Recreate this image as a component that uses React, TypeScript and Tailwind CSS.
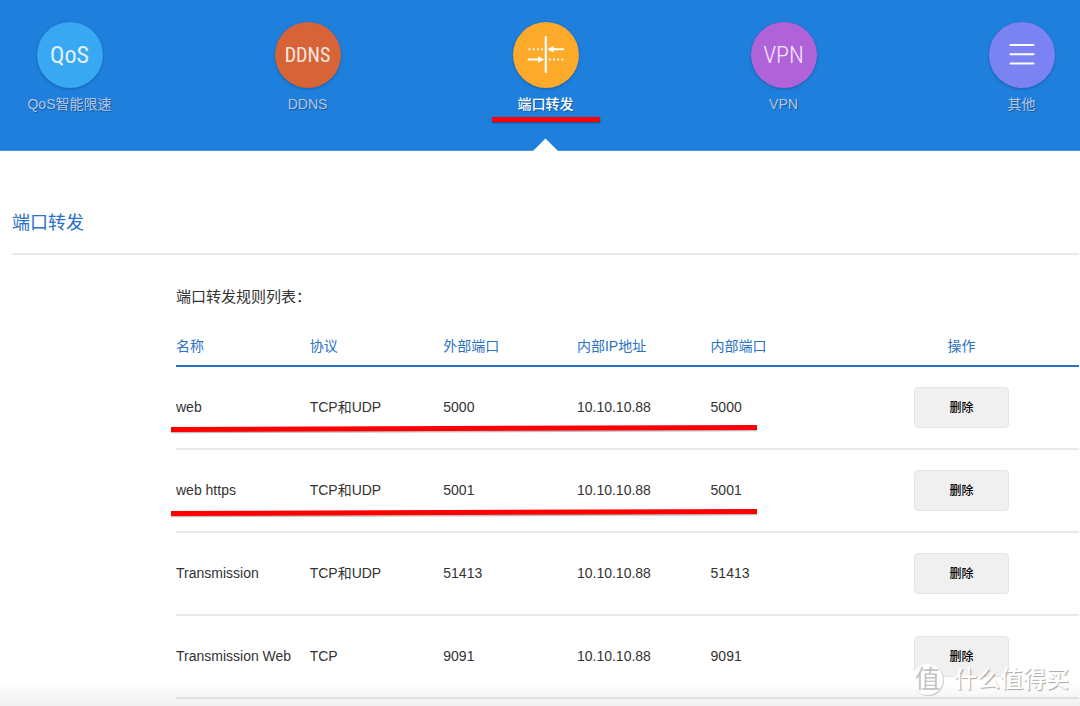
import React from "react";

type NavItem = {
  label: string;
  circle: string;
  icon: React.ReactNode;
  active?: boolean;
};

const iconText =
  "font-['Roboto_Condensed','Open_Sans_Condensed','Liberation_Sans_Narrow',sans-serif] leading-none text-white/85";

function ForwardIcon() {
  return (
    <svg width="66" height="66" viewBox="0 0 66 66" aria-hidden="true">
      <path d="M32.8 15v35" stroke="#fff" strokeWidth="2.2" strokeLinecap="round" />
      <path d="M15.5 27.3H30M35.8 37.5H51" stroke="#fff" strokeWidth="2" strokeDasharray="2 2.2" opacity=".85" />
      <path d="M39 27.3H50.3M15.5 37.5H27" stroke="#fff" strokeWidth="2" strokeLinecap="round" />
      <path d="M34.3 27.3l6.2-3.3v6.6zM31.2 37.5l-6.2-3.3v6.6z" fill="#fff" />
    </svg>
  );
}

function MenuIcon() {
  return (
    <svg width="66" height="66" viewBox="0 0 66 66" aria-hidden="true">
      <path d="M21.5 23h23M21.5 32.3h23M21.5 41.4h23" stroke="#fff" strokeWidth="2" strokeLinecap="round" />
    </svg>
  );
}

const navItems: NavItem[] = [
  {
    label: "QoS智能限速",
    circle: "bg-[#38a8f3]",
    icon: <span className={`${iconText} text-[24px] font-normal`}>QoS</span>,
  },
  {
    label: "DDNS",
    circle: "bg-[#d66436]",
    icon: <span className={`${iconText} text-[20px] font-normal`}>DDNS</span>,
  },
  { label: "端口转发", circle: "bg-[#fda92a]", icon: <ForwardIcon />, active: true },
  {
    label: "VPN",
    circle: "bg-[#b062d9]",
    icon: <span className={`${iconText} text-[24px] font-light`}>VPN</span>,
  },
  { label: "其他", circle: "bg-[#7b83f2]", icon: <MenuIcon /> },
];

const rules = [
  { name: "web", protocol: "TCP和UDP", outer: "5000", ip: "10.10.10.88", inner: "5000" },
  { name: "web https", protocol: "TCP和UDP", outer: "5001", ip: "10.10.10.88", inner: "5001" },
  { name: "Transmission", protocol: "TCP和UDP", outer: "51413", ip: "10.10.10.88", inner: "51413" },
  { name: "Transmission Web", protocol: "TCP", outer: "9091", ip: "10.10.10.88", inner: "9091" },
];

const columns = ["名称", "协议", "外部端口", "内部IP地址", "内部端口"];

function Marker({ className }: { className: string }) {
  return (
    <svg
      className={`pointer-events-none absolute ${className}`}
      width="586"
      height="12"
      viewBox="0 0 586 12"
      aria-hidden="true"
    >
      <path d="M0 7.8L586 5.8" stroke="#000" strokeOpacity=".25" strokeWidth="5" />
      <path d="M0 6.5L586 4.5" stroke="#fe0000" strokeWidth="5" />
    </svg>
  );
}

export default function App() {
  return (
    <div className="relative overflow-hidden bg-white pb-[7px] font-['Liberation_Sans','Noto_Sans_CJK_SC',sans-serif] text-[14px] text-[#333]">
      <nav className="h-[151px] border-b border-[#4a98e4] bg-[#1f7fdd] pt-[22px] pr-[15px] pl-[26px]">
        <ul className="flex h-full justify-between">
          {navItems.map((item) => (
            <li key={item.label} className="relative w-[87px]">
              <a href="#" className="flex flex-col items-center gap-[6px]">
                <span
                  className={`flex size-[66px] items-center justify-center rounded-full shadow-[0_1px_3px_rgba(0,0,0,0.25)] ${item.circle}`}
                >
                  {item.icon}
                </span>
                <span
                  className={`leading-[20px] whitespace-nowrap [text-shadow:1px_1px_1px_rgba(0,0,0,0.3)] ${item.active ? "font-medium text-white" : "text-[#b4c5e3]"}`}
                >
                  {item.label}
                </span>
              </a>
              {item.active && (
                <>
                  <span className="absolute top-[95px] -right-[11px] -left-[10px] h-[5px] bg-[#fe0000] shadow-[0_1px_2px_rgba(0,0,0,0.4)]" />
                  <svg
                    className="absolute -bottom-px left-[31px]"
                    width="25"
                    height="13"
                    viewBox="0 0 25 13"
                    aria-hidden="true"
                  >
                    <path d="M0 13L12.5 0.5L25 13z" fill="#fff" />
                  </svg>
                </>
              )}
            </li>
          ))}
        </ul>
      </nav>

      <main className="pt-[60px] pr-px pl-[12px]">
        <h1 className="border-b-2 border-[#e9e9e9] pb-[18px] text-[18px] leading-[24px] text-[#2a72c3]">端口转发</h1>
        <section className="relative ml-[164px] pt-[30px]">
          <h2 className="mb-[18px] text-[15px] leading-[24px]">端口转发规则列表：</h2>
          <table className="w-full table-fixed border-separate border-spacing-0">
            <thead>
              <tr className="h-[40px] text-[#2a72c3]">
                {columns.map((c) => (
                  <th key={c} className="w-[14.8%] border-b-2 border-[#2a72c3] p-0 text-left font-normal">
                    {c}
                  </th>
                ))}
                <th className="border-b-2 border-[#2a72c3] p-0 text-center font-normal">操作</th>
              </tr>
            </thead>
            <tbody>
              {rules.map((r) => (
                <tr
                  key={r.name}
                  className="h-[83px] whitespace-nowrap [&>td]:border-b-2 [&>td]:border-[#e9e9e9] [&>td]:p-0"
                >
                  <td>{r.name}</td>
                  <td>{r.protocol}</td>
                  <td>{r.outer}</td>
                  <td>{r.ip}</td>
                  <td>{r.inner}</td>
                  <td className="text-center">
                    <button
                      type="button"
                      className="h-[41px] w-[95px] rounded-[4px] border border-[#e5e5e5] bg-[#f0f0f0] align-middle text-[12px] font-medium text-black"
                    >
                      删除
                    </button>
                  </td>
                </tr>
              ))}
            </tbody>
          </table>
          <Marker className="top-[168px] -left-[5px]" />
          <Marker className="top-[252px] -left-[5px]" />
        </section>
      </main>

      <div className="pointer-events-none absolute inset-x-0 bottom-0 h-[24px] bg-linear-to-b from-black/0 to-black/6" />
      <div className="pointer-events-none absolute right-[11px] bottom-[11px] flex items-center gap-[11px] text-white">
        <span className="flex size-[31px] items-center justify-center rounded-full bg-white text-[25px] leading-none text-[#c4c4c4] shadow-[1px_1px_1px_rgba(0,0,0,0.2)]">
          值
        </span>
        <span className="text-[23px] leading-[31px] font-medium [text-shadow:1px_1px_1px_rgba(0,0,0,0.35)]">
          什么值得买
        </span>
      </div>
    </div>
  );
}
